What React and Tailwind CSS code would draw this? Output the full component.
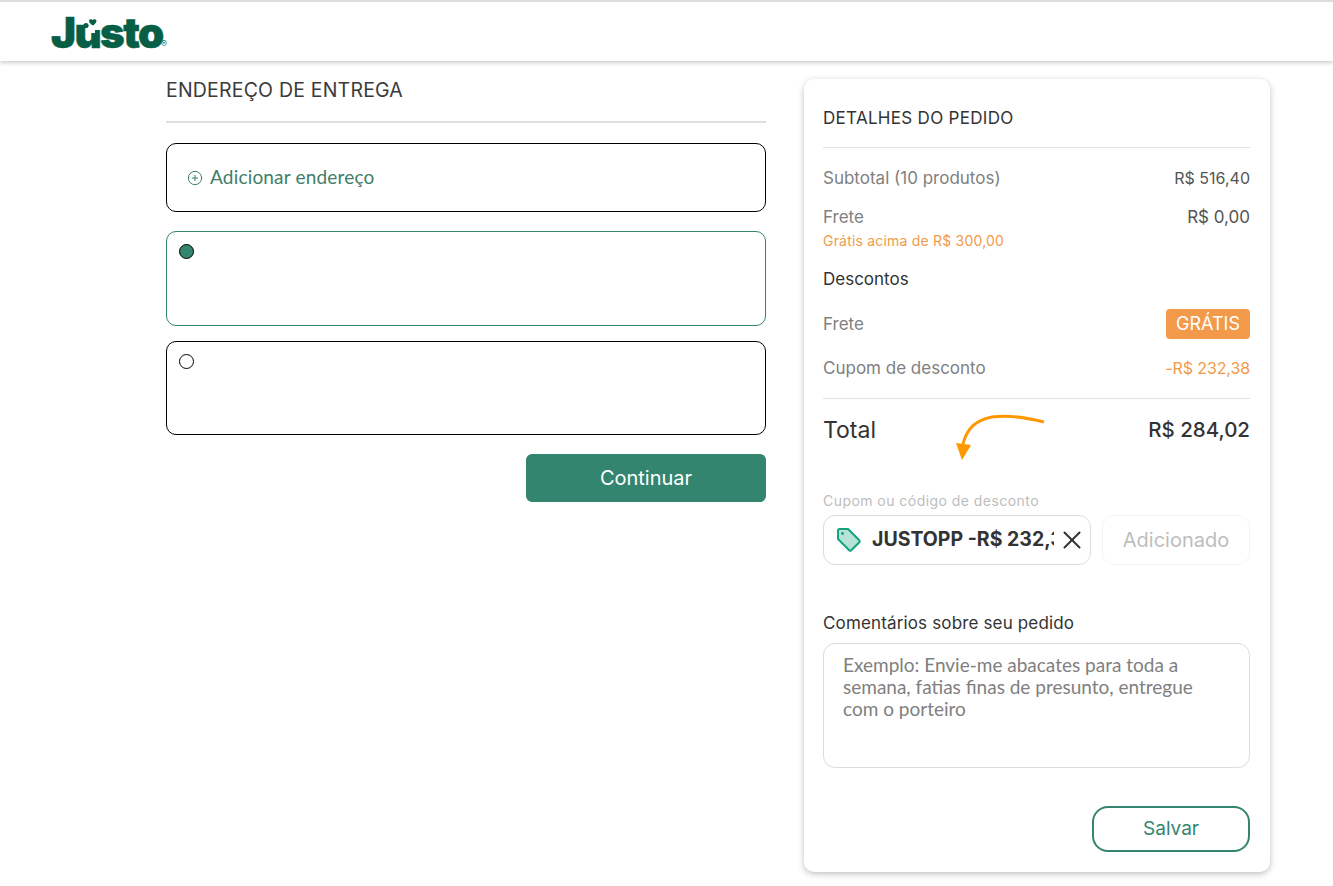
import React from 'react';
import { X, CirclePlus } from 'lucide-react';

const sans = "font-['Inter',sans-serif]";

const Logo = () => (
  <div className="relative w-[118px] h-[36px] ml-[51px] mt-[12px]">
    <span className="absolute left-0 top-[-4px] text-[#075e45] text-[42px] leading-[46px] font-black tracking-[-1.6px] [-webkit-text-stroke:0.5px_#075e45] font-['Inter',sans-serif]">
      Justo
    </span>
    <svg className="absolute left-[28px] top-[2px]" width="24" height="18" viewBox="0 0 24 18">
      <path d="M0 0h24v7h-2v7h-6v3H9v-3H7V7H0z" fill="#fff" />
      <circle cx="7" cy="9.5" r="2.6" fill="#075e45" />
      <path d="M10 5c0-2 2.500-2.500 3.500-1 1-1.500 4-1 4 1 0 1.800-2.200 3.500-3.500 4.500C12.300 8.500 10 6.800 10 5z" fill="#075e45" />
    </svg>
    <span className="absolute left-[110px] top-[25px] text-[9px] leading-[9px] text-[#2f7d66] font-['Inter',sans-serif]">®</span>
  </div>
);

const AddressCard = ({ selected, className = '' }) => (
  <div className={`rounded-[10px] border pl-[12px] pt-[12px] ${selected ? 'border-[#338570]' : 'border-black'} ${className}`}>
    <div className={`w-[15px] h-[15px] rounded-full border border-black ${selected ? 'bg-[#338570]' : 'bg-white'}`} />
  </div>
);

const Row = ({ label, value, className = '' }) => (
  <div className={`flex justify-between items-center text-[16px] leading-[24px] ${className}`}>
    <span className="text-[#808080] text-[17px]">{label}</span>
    {value}
  </div>
);

export default function App() {
  return (
    <div className={`min-h-[886px] bg-white ${sans}`}>
      <header className="h-[61px] bg-white border-t-2 border-[#dcdcdc] shadow-[0_2px_4px_rgba(0,0,0,0.2)]">
        <Logo />
      </header>

      <main className="flex items-start pl-[166px] pt-[18px]">
        <section className="w-[600px]">
          <h2 className="text-[19.5px] tracking-[0.2px] leading-[23px] text-[#3b3b3b] pb-[19px] border-b-2 border-[#dedede]">ENDEREÇO DE ENTREGA</h2>
          <div className="mt-[20px] flex flex-col">
            <div className="h-[69px] rounded-[10px] border border-black flex items-center pl-[20px] gap-[7px] text-[#3f7d68]">
              <CirclePlus size={16} strokeWidth={1.5} />
              <span className="text-[19px] tracking-[0.18px] font-['Lato',sans-serif]">Adicionar endereço</span>
            </div>
            <AddressCard selected className="h-[95px] mt-[19px]" />
            <AddressCard className="h-[94px] mt-[15px]" />
          </div>
          <div className="flex justify-end mt-[19px]">
            <button className="w-[240px] h-[48px] rounded-[6px] bg-[#338570] text-white text-[20px]">Continuar</button>
          </div>
        </section>

        <aside className="relative w-[466px] h-[793px] ml-[38px] rounded-[10px] bg-white pl-[19px] pr-[20px] pt-[27px] shadow-[0_2px_6px_rgba(0,0,0,0.25)]">
          <h3 className="text-[17px] tracking-[0.3px] leading-[24px] text-[#333] pb-[17px] border-b border-[#e2e2e2]">DETALHES DO PEDIDO</h3>

          <Row className="mt-[18px]" label="Subtotal (10 produtos)" value={<span className="text-[#555]">R$ 516,40</span>} />
          <Row className="mt-[15px]" label="Frete" value={<span className="text-[#555] text-[17px]">R$ 0,00</span>} />
          <p className="text-[14px] tracking-[0.2px] leading-[20px] text-[#f29a4a] mt-[2px]">Grátis acima de R$ 300,00</p>
          <p className="text-[17px] leading-[24px] text-[#333] mt-[16px]">Descontos</p>
          <Row
            className="mt-[18px]"
            label="Frete"
            value={<span className="h-[30px] w-[84px] flex items-center justify-center rounded-[4px] bg-[#f29a4a] text-white text-[18px]">GRÁTIS</span>}
          />
          <Row className="mt-[17px]" label="Cupom de desconto" value={<span className="text-[#f29a4a] tracking-[-0.1px]">-R$ 232,38</span>} />

          <div className="mt-[18px] pt-[16px] border-t border-[#e2e2e2] flex justify-between items-center leading-[30px] text-[#333]">
            <span className="text-[23px]">Total</span>
            <span className="font-medium text-[20.5px]">R$ 284,02</span>
          </div>

          <svg className="absolute left-[150px] top-[335px]" width="95" height="50" viewBox="0 0 95 50">
            <path d="M90 8C70 3 52 1 38 3 22 6 13 14 9 30" fill="none" stroke="#ff9800" strokeWidth="3" />
            <path d="M2 29L17 31 8 46z" fill="#ff9800" />
          </svg>

          <p className="mt-[46px] text-[14px] tracking-[0.45px] leading-[20px] text-[#bdbdbd]">Cupom ou código de desconto</p>
          <div className="mt-[4px] flex gap-[11px]">
            <div className="w-[268px] h-[50px] rounded-[12px] border border-[#dcdcdc] flex items-center pl-[12px] pr-[3px]">
              <svg width="26" height="26" viewBox="0 0 26 26" className="shrink-0">
                <path d="M2 3.500A1.500 1.500 0 0 1 3.500 2h8.600l11.200 11.200a1.500 1.500 0 0 1 0 2.100l-8 8a1.500 1.500 0 0 1-2.100 0L2 12z" fill="#b5e3d6" stroke="#14a37f" strokeWidth="2" strokeLinejoin="round" />
                <circle cx="6.500" cy="6.500" r="1.400" fill="#14a37f" />
              </svg>
              <span className="ml-[10px] w-[182px] overflow-hidden whitespace-nowrap text-[19.5px] font-bold text-[#333]">JUSTOPP -R$ 232,38</span>
              <X size={30} strokeWidth={1.6} className="ml-auto text-[#333]" />
            </div>
            <button className="w-[148px] h-[50px] rounded-[12px] border border-[#f3f3f3] text-[20px] text-[#bdbdbd]">Adicionado</button>
          </div>

          <p className="mt-[46px] text-[17px] tracking-[0.15px] leading-[24px] text-[#333]">Comentários sobre seu pedido</p>
          <div className="mt-[8px] h-[125px] rounded-[12px] border border-[#dcdcdc] pl-[19px] pr-[40px] pt-[10px] text-[19px] leading-[22px] text-[#808080] font-['Lato',sans-serif]">
            Exemplo: Envie-me abacates para toda a semana, fatias finas de presunto, entregue com o porteiro
          </div>

          <div className="flex justify-end mt-[38px]">
            <button className="w-[158px] h-[46px] rounded-[16px] border-2 border-[#338570] text-[#338570] text-[19px]">Salvar</button>
          </div>
        </aside>
      </main>
    </div>
  );
}
